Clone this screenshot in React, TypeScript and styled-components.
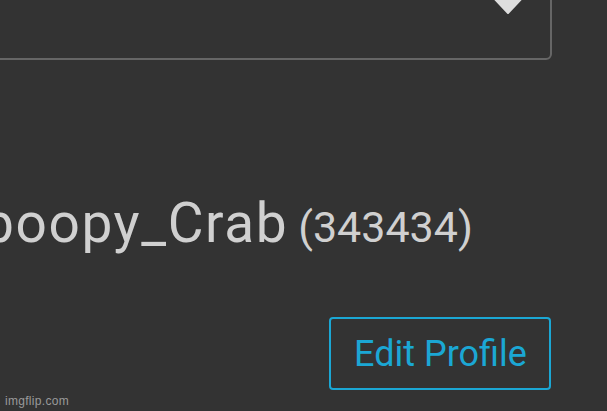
import styled, { createGlobalStyle } from 'styled-components';

const GlobalStyle = createGlobalStyle`
	html, body {
		margin: 0;
		padding: 0;
		background: #333333;
		overflow: hidden;
	}
`;

export default function App() {
	return (
		<>
			<GlobalStyle />
			<StyledPage>
				<StyledSelect>
					<DropdownCaret />
				</StyledSelect>
				<StyledNameRow>
					<StyledUserName>boopy_Crab</StyledUserName>
					<StyledUserId>(343434)</StyledUserId>
				</StyledNameRow>
				<StyledActions>
					<StyledEditButton type="button">Edit Profile</StyledEditButton>
				</StyledActions>
				<StyledWatermark>imgflip.com</StyledWatermark>
			</StyledPage>
		</>
	);
}

const DropdownCaret = () => {
	return (
		<svg width="40" height="20" viewBox="0 0 40 20">
			<path
				d="M3 1 L37 1 L20 19 Z"
				fill="#dedede"
				stroke="#dedede"
				strokeWidth="2"
				strokeLinejoin="round"
			/>
		</svg>
	);
};

const StyledPage = styled.div`
	position: relative;
	width: 607px;
	height: 411px;
	overflow: hidden;
	display: flex;
	flex-direction: column;
	background: #333333;
	font-family: Roboto, 'Noto Sans', sans-serif;
`;

const StyledSelect = styled.div`
	box-sizing: border-box;
	margin: -40px 0 0 -20px;
	width: 572px;
	height: 100px;
	flex-shrink: 0;
	border: 2px solid #666666;
	border-radius: 6px;
	display: flex;
	justify-content: flex-end;
	align-items: flex-start;
	padding: 32px 22px 0 0;
`;

const StyledNameRow = styled.div`
	margin: 131px 0 0 -17px;
	height: 64px;
	display: flex;
	align-items: baseline;
	line-height: 64px;
	color: #d0d0d0;
	white-space: nowrap;
`;

const StyledUserName = styled.span`
	font-size: 55px;
	letter-spacing: 1.6px;
`;

const StyledUserId = styled.span`
	font-size: 43px;
	margin-left: 10px;
`;

const StyledActions = styled.div`
	margin-top: 62px;
	display: flex;
	justify-content: flex-end;
	padding-right: 56px;
`;

const StyledEditButton = styled.button`
	box-sizing: border-box;
	width: 222px;
	height: 73px;
	border: 2px solid #1ba7d4;
	border-radius: 4px;
	background: transparent;
	color: #1ba7d4;
	font-family: Roboto, 'Noto Sans', sans-serif;
	font-size: 36px;
	padding: 0 0 0 1px;
	display: flex;
	align-items: center;
	justify-content: center;
`;

const StyledWatermark = styled.div`
	position: absolute;
	left: 5px;
	bottom: 3px;
	font-family: 'Liberation Sans', Arial, sans-serif;
	font-size: 12px;
	letter-spacing: 0.3px;
	color: #9a9a9a;
`;
